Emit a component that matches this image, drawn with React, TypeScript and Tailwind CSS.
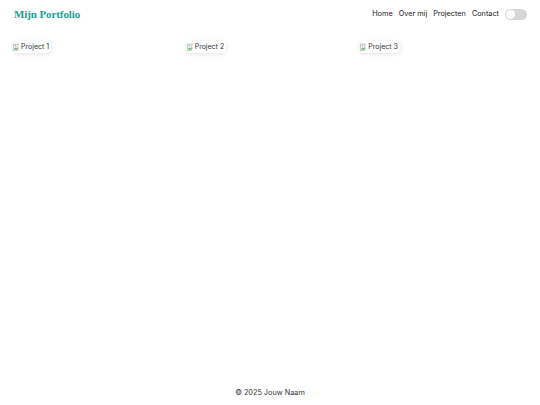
import React from "react";

const projects = ["Project 1", "Project 2", "Project 3"];

// broken image placeholder, as the browser draws it at half size
const BrokenImg = ({ alt }: { alt: string }) => (
  <span className="inline-flex items-center rounded-[4px] shadow-[0_1px_4px_rgba(0,0,0,0.12)] pr-[2px] py-[1px]">
    <svg width="8" height="8" viewBox="0 0 16 16" className="shrink-0">
      <path d="M1 2h10l-2 5 2 3-2 5H1z" fill="#f2f2f2" stroke="#9a9a9a" strokeWidth="1" />
      <path d="M2 13l3-4 2 2 2-3v5H2z" fill="#4caf50" />
      <circle cx="5" cy="5" r="1.3" fill="#64b5f6" />
    </svg>
    <span className="text-[7px] leading-[10px] text-[#333]">{alt}</span>
  </span>
);

export default function App() {
  return (
    <div className="min-h-[405px] flex flex-col bg-white font-['Inter','Liberation_Sans',sans-serif] text-[#222]">
      {/* header */}
      <header className="h-[28px] flex items-center justify-between pl-[14px] pr-[13px]">
        <h1 className="font-['Liberation_Serif',serif] font-bold text-[11px] text-[#1b9e92] tracking-[-0.1px]">
          Mijn Portfolio
        </h1>
        <nav className="flex items-center gap-[6px] text-[7.3px]">
          <a>Home</a>
          <a>Over mij</a>
          <a>Projecten</a>
          <a>Contact</a>
          <span className="w-[22px] h-[11px] rounded-full bg-[#d6d6d6] flex items-center px-[1px]">
            <span className="w-[9px] h-[9px] rounded-full bg-white" />
          </span>
        </nav>
      </header>

      {/* projects */}
      <main className="grid grid-cols-3 gap-[7px] px-[13px] pt-[13px] flex-1 content-start">
        {projects.map((p) => (
          <div key={p} className="flex">
            <BrokenImg alt={p} />
          </div>
        ))}
      </main>

      {/* footer */}
      <footer className="h-[24px] flex items-center justify-center text-[7.3px] text-[#333]">
        © 2025 Jouw Naam
      </footer>
    </div>
  );
}
